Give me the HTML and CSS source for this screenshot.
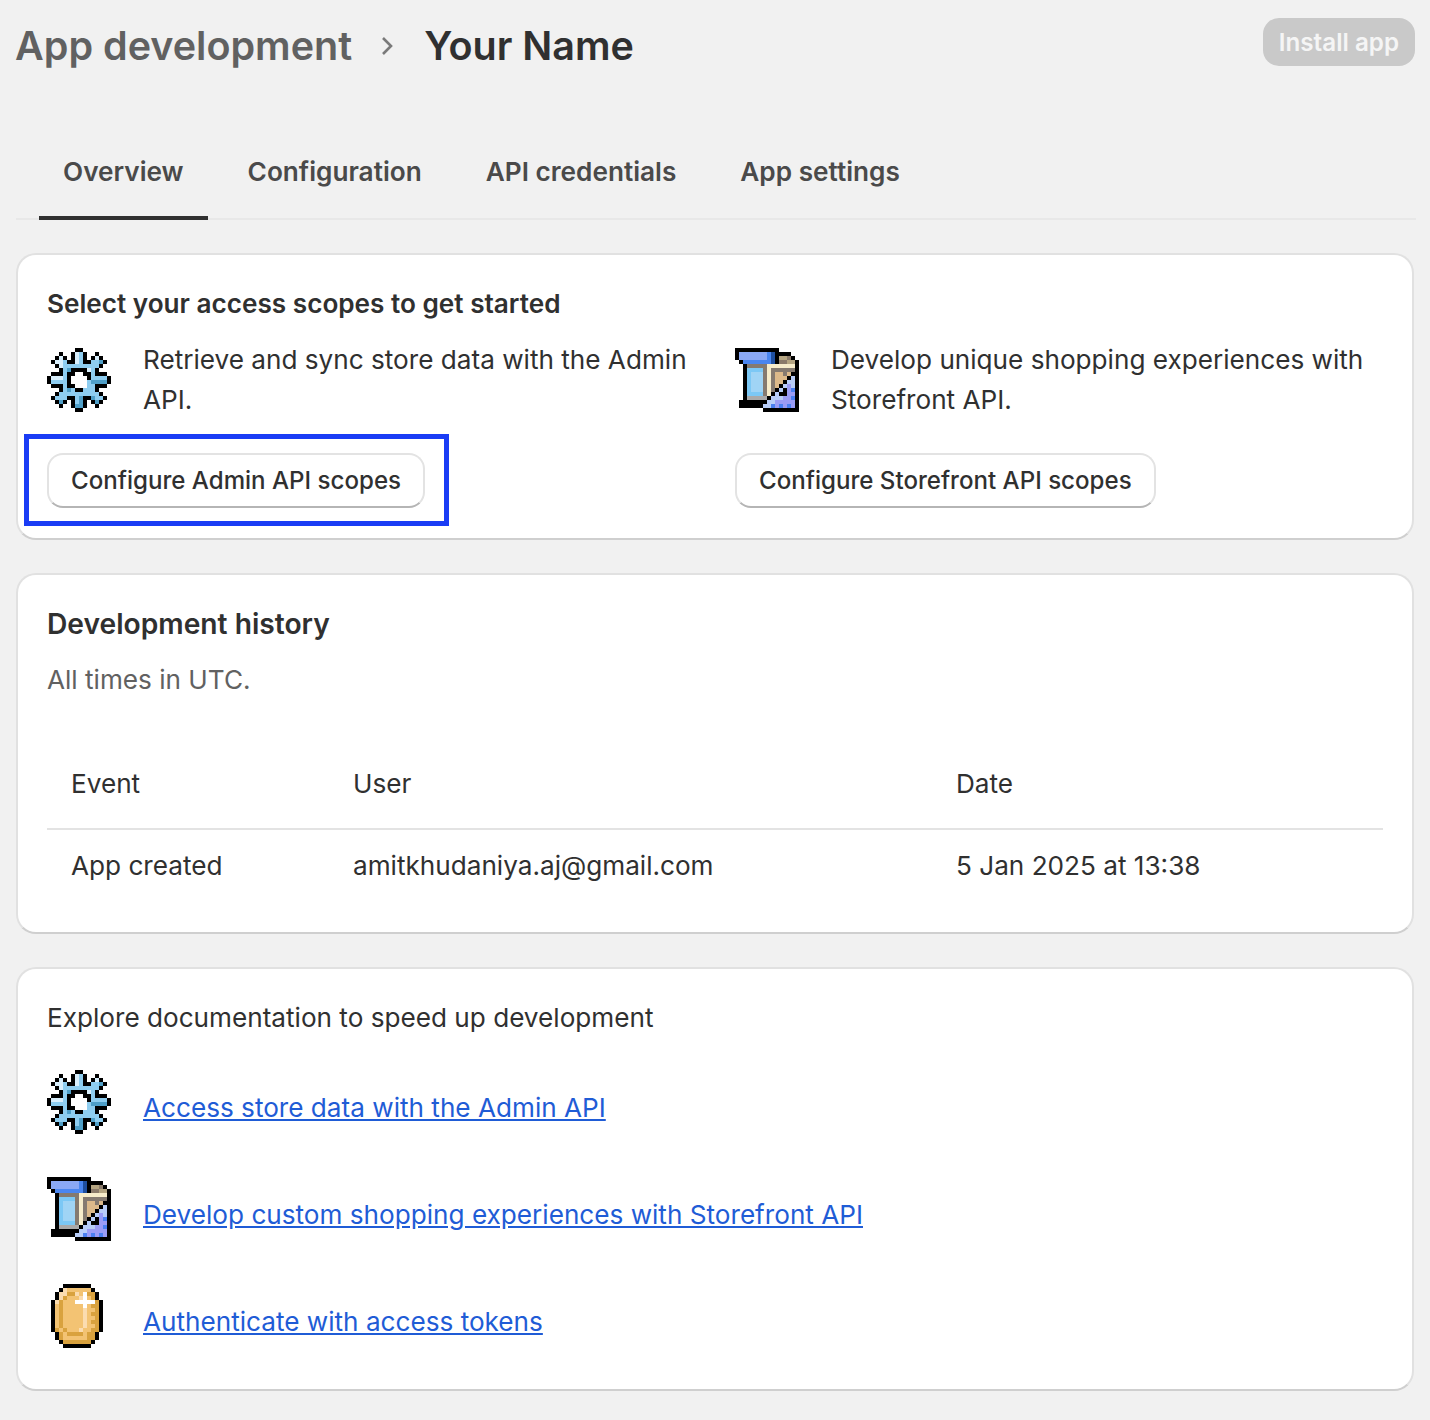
FILE: index.html
```html
<!DOCTYPE html>
<html>
<head>
  <title>App development - Your Name</title>
  <link rel="stylesheet" href="styles.css">
</head>
<body>

  <!-- Page header -->
  <div class="pageHeader">
    <div class="crumbs">
      <span class="crumbParent">App development</span>
      <svg class="crumbArrow" viewBox="0 0 12 20"><path d="M2 2l8 8-8 8"/></svg>
      <span class="crumbCurrent">Your Name</span>
    </div>
    <button class="installBtn">Install app</button>
  </div>

  <!-- Tabs -->
  <div class="tabs">
    <div class="tab active">Overview</div>
    <div class="tab">Configuration</div>
    <div class="tab">API credentials</div>
    <div class="tab">App settings</div>
  </div>

  <!-- Access scopes -->
  <div class="card scopesCard">
    <h2 class="cardTitle small">Select your access scopes to get started</h2>
    <div class="scopes">
      <div class="scope">
        <div class="scopeInfo">
          <svg class="pixelIcon" data-icon="gear" viewBox="0 0 16 16"></svg>
          <p>Retrieve and sync store data with the Admin API.</p>
        </div>
        <div class="highlight"></div>
        <button class="btn">Configure Admin API scopes</button>
      </div>
      <div class="scope">
        <div class="scopeInfo">
          <svg class="pixelIcon" data-icon="tools" viewBox="0 0 16 16"></svg>
          <p>Develop unique shopping experiences with Storefront API.</p>
        </div>
        <button class="btn">Configure Storefront API scopes</button>
      </div>
    </div>
  </div>

  <!-- Development history -->
  <div class="card">
    <h2 class="cardTitle">Development history</h2>
    <p class="muted">All times in UTC.</p>
    <div class="historyRow head">
      <div>Event</div>
      <div>User</div>
      <div>Date</div>
    </div>
    <div class="historyRow">
      <div>App created</div>
      <div>amitkhudaniya.aj@gmail.com</div>
      <div>5 Jan 2025 at 13:38</div>
    </div>
  </div>

  <!-- Docs -->
  <div class="card docsCard">
    <p class="docsTitle">Explore documentation to speed up development</p>
    <div class="docs">
      <div class="doc">
        <svg class="pixelIcon" data-icon="gear" viewBox="0 0 16 16"></svg>
        <a href="#">Access store data with the Admin API</a>
      </div>
      <div class="doc">
        <svg class="pixelIcon" data-icon="tools" viewBox="0 0 16 16"></svg>
        <a href="#">Develop custom shopping experiences with Storefront API</a>
      </div>
      <div class="doc">
        <svg class="pixelIcon" data-icon="coin" viewBox="0 0 16 16"></svg>
        <a href="#">Authenticate with access tokens</a>
      </div>
    </div>
  </div>

  <script src="icons.js"></script>
</body>
</html>
```

FILE: styles.css
```css
body {
  background: #f1f1f1;
  color: #303030;
  font-family: Inter, "Liberation Sans", sans-serif;
  font-size: 26.15px;
  line-height: 40px;
  margin: 0;
  padding: 16px 16px 30px;
}

p, h2 {
  margin: 0;
}

button {
  font-family: inherit;
}

.pageHeader {
  display: flex;
  justify-content: space-between;
  align-items: flex-start;
  height: 60px;
}

.crumbs {
  display: flex;
  align-items: center;
  margin-left: -1px;
  font-size: 39.5px;
  line-height: 60px;
  font-weight: 600;
}

.crumbParent {
  color: #616161;
}

.crumbArrow {
  width: 12px;
  height: 20px;
  margin: 0 31px 0 29px;
  fill: none;
  stroke: #7a7a7a;
  stroke-width: 2.6;
}

.installBtn {
  height: 48px;
  margin: 2px -1px 0 0;
  padding: 0 16px;
  border: none;
  border-radius: 16px;
  background: #c9c9c9;
  color: #f5f5f5;
  font-size: 24.2px;
  font-weight: 600;
}

.tabs {
  display: flex;
  gap: 16px;
  height: 96px;
  margin: 48px -2px 33px 0;
  padding-left: 23px;
  border-bottom: 2px solid #e8e8e8;
  box-sizing: border-box;
}

.tab {
  height: 96px;
  padding: 0 24px;
  line-height: 96px;
  box-sizing: border-box;
  color: #4a4a4a;
  font-size: 26.2px;
  font-weight: 600;
  white-space: nowrap;
}

.tab.active {
  border-bottom: 4px solid #303030;
  border-radius: 4px 4px 0 0;
}

.card {
  background: white;
  border: 2px solid #e1e1e1;
  border-bottom-color: #cfcfcf;
  border-radius: 20px;
  padding: 29px 29px 29px;
  margin-bottom: 33px;
}

.scopesCard {
  padding-bottom: 30px;
}

.cardTitle {
  font-size: 28.2px;
  line-height: 40px;
  font-weight: 600;
}

.cardTitle.small {
  font-size: 26.15px;
}

.scopes {
  display: grid;
  grid-template-columns: 1fr 1fr;
  column-gap: 40px;
  margin-top: 16px;
}

.scope {
  position: relative;
}

.scopeInfo {
  display: flex;
  align-items: center;
  gap: 32px;
}

.pixelIcon {
  display: block;
  width: 64px;
  height: 64px;
  flex: none;
  shape-rendering: crispEdges;
}

.btn {
  display: block;
  position: relative;
  height: 55px;
  margin-top: 33px;
  padding: 0 22px;
  background: white;
  border: 2px solid #e3e3e3;
  border-bottom-color: #b5b5b5;
  border-radius: 16px;
  color: #303030;
  font-size: 24.1px;
  font-weight: 500;
}

.highlight {
  position: absolute;
  left: -23px;
  top: 94px;
  width: 415px;
  height: 82px;
  border: 5px solid #1a3cf5;
}

.muted {
  margin-top: 16px;
  color: #616161;
}

.historyRow {
  display: grid;
  grid-template-columns: 282px 603px 1fr;
  align-items: center;
  height: 71px;
  margin-bottom: 2px;
  padding-left: 24px;
}

.historyRow.head {
  height: 89px;
  margin: 39px 0 0;
  border-bottom: 2px solid #e3e3e3;
}

.docsCard {
  padding-bottom: 41px;
}

.docs {
  display: flex;
  flex-direction: column;
  gap: 43px;
  margin-top: 32px;
}

.doc {
  display: flex;
  align-items: center;
  gap: 32px;
}

.doc a {
  padding-top: 12px;
  color: #1f5cd6;
}
```

FILE: icons.js
```js
// 16x16 pixel icons, one string per row
const palette = {
  K: "#000000",
  // gear
  W: "#d9effc", L: "#8ecdf0", D: "#4f9fc8", H: "#ffffff",
  // tools
  A: "#8aa8f5", B: "#4a86f0", N: "#1f4f9f", T: "#b5a582", O: "#8a7a6a",
  G: "#857a70", C: "#f7ecca", S: "#7cc8f5", P: "#a0d4f5", F: "#dcb98a",
  E: "#b8cdf8", V: "#9a9cf5", I: "#4a7ff0", R: "#aaaaaa",
  // coin
  m: "#f3c373", p: "#fbdcb0", d: "#d9a23e", w: "#ffffff"
};

const icons = {
  gear: [
    ".......KK.......",
    "...K..KWLK..K...",
    "..KWK.KWLK.KWK..",
    ".KWWLKKWLKKLLDK.",
    "..KWLLLLLLLLLK..",
    "...KLDKKKKWLK...",
    ".KKKLKKHHKKLKKK.",
    "KWWWLKHHHHKLLLLK",
    "KLLLLKHHHHLDDDDK",
    ".KKKLKKHHHLLKKK.",
    "...KLDLKKLLLK...",
    "..KLLLLLLLLLLK..",
    ".KLLLKKLDKKDLLK.",
    "..KDK.KLDK.KDK..",
    "...K..KDDK..K...",
    ".......KK......."
  ],
  tools: [
    "KKKKKKKKKKK.....",
    "KAAAAAAABNKKKK..",
    "KAAAAAAABNKTTOK.",
    ".KBBBBBBBNKOOTTK",
    "..KGGGGGCCCCCCCK",
    "..KSSSSGCGGGGGGK",
    "..KSPPPGCGFFGFKK",
    "..KSPPPGCGFFFKEK",
    "..KSPPPGCGFFKEEK",
    "..KSPPPGCGFKEVEK",
    "..KSPPPGCGKEKVIK",
    "..KSSSSGCKEKKVVK",
    "..KRRRRRKEEEVVIK",
    ".KKKKKKKEEVVVVVK",
    ".KKKKKKEEIVIVIVK",
    ".......KKKKKKKKK"
  ],
  coin: [
    "....KKKKKKK.....",
    "...KpmmmmmmK....",
    "..KppddpmwddK...",
    "..KpdmmmpwmdK...",
    ".KpdmmmwwwwwdK..",
    ".KmdmmmmmwmddK..",
    ".KmdmmmmmpmmdK..",
    ".KmdmmmmmpmddK..",
    ".KmdmmmmmpmmdK..",
    ".KmdmmmmmpmddK..",
    ".KmdmmmmmpmmdK..",
    ".KdmdmmmpmmddK..",
    "..KdmddddmddK...",
    "..KdmmmmmmddK...",
    "...KdddddddK....",
    "....KKKKKKK....."
  ]
};

document.querySelectorAll(".pixelIcon").forEach(svg => {
  let rects = "";
  icons[svg.dataset.icon].forEach((row, y) => {
    [...row].forEach((c, x) => {
      if (c !== ".") {
        rects += `<rect x="${x}" y="${y}" width="1" height="1" fill="${palette[c]}"/>`;
      }
    });
  });
  svg.innerHTML = rects;
});
```
